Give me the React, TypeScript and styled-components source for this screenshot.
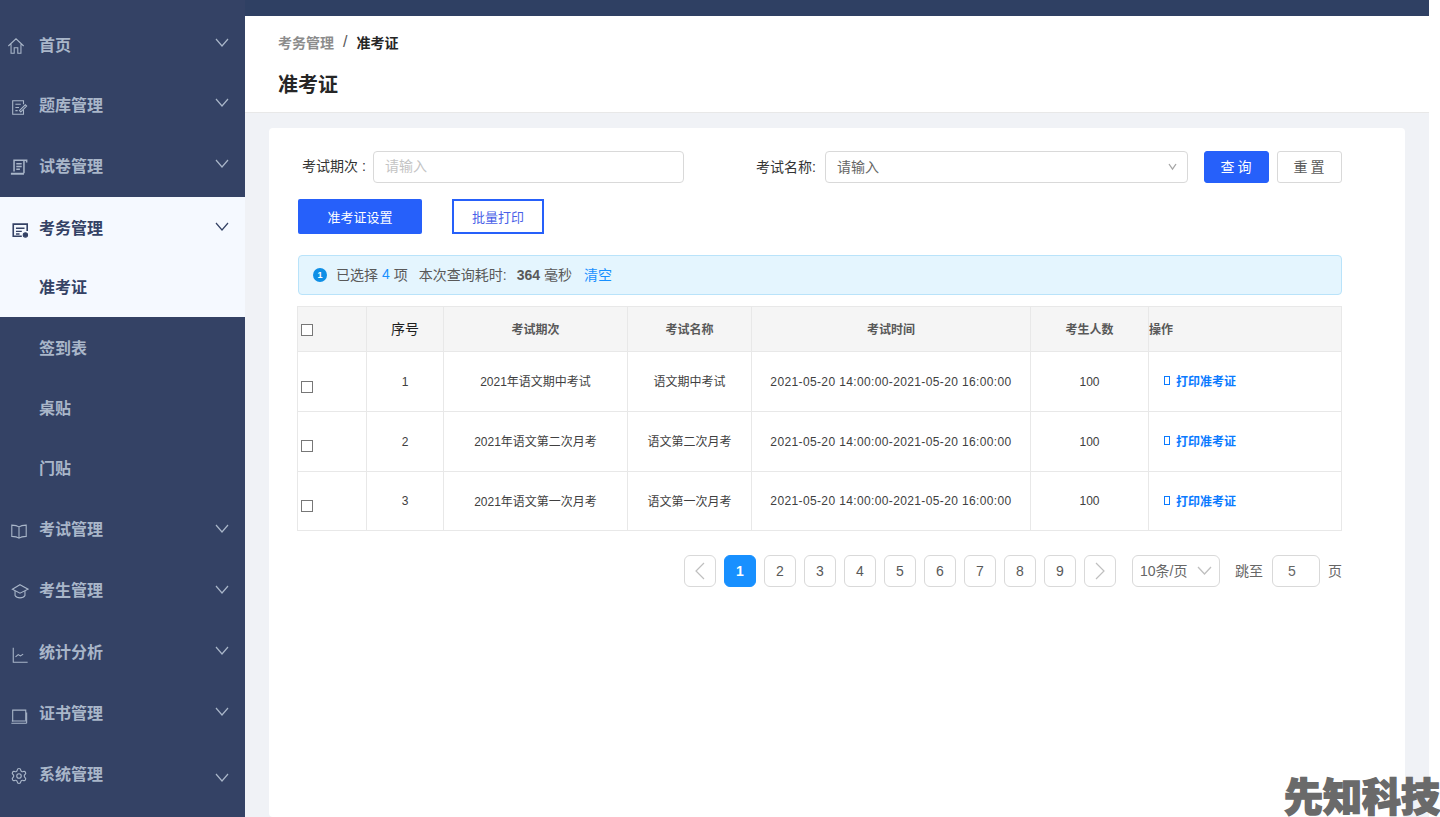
import React, { FC, ReactNode } from 'react';
import styled, { createGlobalStyle } from 'styled-components';

const GlobalStyle = createGlobalStyle`
	html, body {
		margin: 0;
		height: 100%;
		background: #fff;
		overflow: hidden;
	}
	body {
		font-family: 'Liberation Sans', 'Noto Sans CJK SC', sans-serif;
		color: #333;
	}
	* {
		box-sizing: border-box;
	}
`;

const icons: Record<string, ReactNode> = {
	home: (
		<path d="M1.5 10 L10 2 L18.5 10 M4.5 8 V18 H8 V12 H12 V18 H15.5 V8" />
	),
	edit: (
		<>
			<path d="M15 7 V3 H3 V18 H15 V13" />
			<path d="M6 7 H12 M6 10.5 H10 M6 14 H8.5" />
			<path d="M10.5 14 L17 7.5 L18.5 9 L12 15.5 Z" />
		</>
	),
	paper: (
		<>
			<path d="M4.5 15 V2.5 H18.5 V5 M15.5 2.5 V17" strokeWidth="1.7" />
			<path d="M7 6.5 H13 M7 9.5 H13 M7 12.5 H11" strokeWidth="1.7" />
			<path d="M1 17.5 H15.5" strokeWidth="2.2" />
		</>
	),
	exam: (
		<>
			<path d="M18 11 V3.5 H2.5 V17 H12" strokeWidth="1.8" />
			<path d="M5.5 8 H15 M5.5 11.5 H12 M5.5 14.5 H9.5" strokeWidth="1.6" />
			<circle cx="16" cy="15.5" r="2.4" fill="currentColor" />
		</>
	),
	book: (
		<path d="M10 5.5 C7.5 3.5 5 3.5 2 3.5 V16 C5 16 7.5 16 10 18 C12.5 16 15 16 18 16 V3.5 C15 3.5 12.5 3.5 10 5.5 Z M10 5.5 V18" />
	),
	cap: (
		<>
			<path d="M10 3 L19 8 L10 12.5 L1.5 8 Z" />
			<path d="M4.5 10 V15 C6.5 18.5 13.5 18.5 15.5 15 V10" />
		</>
	),
	chart: (
		<>
			<path d="M2.5 2 V18 H18.5" />
			<path d="M5 12 L8 9.5 L10.5 11 L13.5 9" />
		</>
	),
	laptop: (
		<>
			<path d="M3 16 V3.5 H17.5 V16" />
			<path d="M1.5 18 H18.5 M2 15.5 H17 M18.5 6 V18" />
		</>
	),
	gear: (
		<g transform="scale(.833)">
			<path
				strokeWidth="1.5"
				d="M9.671 4.136a2.34 2.34 0 0 1 4.659 0 2.34 2.34 0 0 0 3.319 1.915 2.34 2.34 0 0 1 2.33 4.033 2.34 2.34 0 0 0 0 3.831 2.34 2.34 0 0 1-2.33 4.033 2.34 2.34 0 0 0-3.319 1.915 2.34 2.34 0 0 1-4.659 0 2.34 2.34 0 0 0-3.32-1.915 2.34 2.34 0 0 1-2.33-4.033 2.34 2.34 0 0 0 0-3.831A2.34 2.34 0 0 1 6.35 6.051a2.34 2.34 0 0 0 3.319-1.915"
			/>
			<circle cx="12" cy="12" r="3" strokeWidth="1.5" />
		</g>
	),
};

const Page = styled.div`
	display: flex;
	height: 817px;
	width: 1440px;
	overflow: hidden;
	position: relative;
`;

const Sidebar = styled.nav`
	width: 245px;
	flex: none;
	background: #344265;
	padding-top: 14px;
`;

const ActiveGroup = styled.div`
	background: #f5f9ff;
`;

const MenuRow = styled.div<{ $height: number; $active?: boolean; $lift?: number }>`
	display: flex;
	align-items: center;
	height: ${(p) => p.$height}px;
	padding-left: 39px;
	padding-bottom: ${(p) => p.$lift ?? 2}px;
	position: relative;
	font-size: 16px;
	font-weight: 700;
	color: ${(p) => (p.$active ? '#344265' : '#a9b6c9')};
`;

const MenuIcon = styled.svg<{ $left: number; $shift: number }>`
	position: absolute;
	left: ${(p) => p.$left}px;
	top: calc(50% - 9px + ${(p) => p.$shift}px);
	width: 18px;
	height: 18px;
	fill: none;
	stroke: currentColor;
	stroke-width: 1.2;
`;

const Chevron = styled.svg<{ $shift: number }>`
	position: absolute;
	left: 215px;
	top: calc(50% - 5px + ${(p) => p.$shift}px);
	width: 14px;
	height: 9px;
	fill: none;
	stroke: currentColor;
	stroke-width: 1.2;
`;

const Main = styled.main`
	flex: none;
	width: 1184px;
	display: flex;
	flex-direction: column;
	background: #f0f2f6;
`;

const TopBar = styled.div`
	height: 16px;
	background: #2f4063;
`;

const Header = styled.header`
	height: 97px;
	background: #fff;
	border-bottom: 1px solid #e8e8e8;
	padding: 18px 0 0 33px;
`;

const Breadcrumb = styled.div`
	display: flex;
	gap: 9px;
	height: 16px;
	align-items: center;
	font-size: 14px;
	color: #8c8c8c;
	font-weight: 700;

	span:last-child {
		color: #262626;
	}
`;

const BreadcrumbSep = styled.span`
	font-size: 16px;
	font-weight: 400;
	color: #595959;
`;

const Title = styled.h1`
	margin: 21px 0 0;
	font-size: 20px;
	line-height: 28px;
	font-weight: 700;
	color: #262626;
`;

const Card = styled.section`
	flex: 1;
	margin: 15px 24px 0;
	background: #fff;
	border-radius: 4px;
	padding: 23px 63px 0 29px;
`;

const FilterRow = styled.div`
	display: flex;
	align-items: center;
	height: 32px;
	padding-left: 4px;
`;

const FieldLabel = styled.label<{ $width: number; $lift: number }>`
	width: ${(p) => p.$width}px;
	flex: none;
	font-size: 14px;
	color: #333;
	white-space: nowrap;
	padding-bottom: ${(p) => p.$lift}px;
`;

const TextBox = styled.div<{ $width: number; $muted?: boolean }>`
	width: ${(p) => p.$width}px;
	height: 32px;
	margin-left: 6px;
	border: 1px solid #d9d9d9;
	border-radius: 4px;
	padding: 0 7px ${(p) => (p.$muted ? 4 : 2)}px 11px;
	display: flex;
	align-items: center;
	justify-content: space-between;
	font-size: 14px;
	color: ${(p) => (p.$muted ? '#c4c4c4' : '#666')};
	flex: none;
`;

const FilterButton = styled.button<{ $primary?: boolean }>`
	width: 65px;
	height: 32px;
	margin-left: 8px;
	border-radius: 3px;
	border: 1px solid ${(p) => (p.$primary ? '#2660fa' : '#d9d9d9')};
	background: ${(p) => (p.$primary ? '#2660fa' : '#fff')};
	color: ${(p) => (p.$primary ? '#fff' : '#595959')};
	font: inherit;
	font-size: 14px;
	letter-spacing: 3px;
	padding: 0 0 2px 2px;
	flex: none;
`;

const ActionRow = styled.div`
	display: flex;
	gap: 30px;
	margin-top: 16px;
`;

const SolidButton = styled.button`
	width: 124px;
	height: 35px;
	border: 0;
	border-radius: 2px;
	background: #2660fa;
	color: #fff;
	font: inherit;
	font-size: 13px;
	padding: 0;
`;

const OutlineButton = styled.button`
	width: 92px;
	height: 35px;
	border: 2px solid #2660fa;
	background: #fff;
	color: #4a5fe8;
	font: inherit;
	font-size: 13px;
	padding: 0;
`;

const Alert = styled.div`
	margin-top: 21px;
	height: 40px;
	background: #e4f5fe;
	border: 1px solid #b9e3fa;
	border-radius: 4px;
	display: flex;
	align-items: center;
	padding: 0 0 2px 14px;
	font-size: 14px;
	color: #595959;
	white-space: pre;
`;

const AlertDot = styled.span`
	width: 14px;
	height: 14px;
	border-radius: 50%;
	background: #0e8fe6;
	color: #fff;
	font-size: 9px;
	font-weight: 700;
	display: flex;
	align-items: center;
	justify-content: center;
	margin: 2px 9px 0 0;
`;

const Blue = styled.span<{ $gap?: number }>`
	color: #1890ff;
	margin-left: ${(p) => p.$gap ?? 0}px;
`;

const Gap = styled.span<{ $gap: number }>`
	margin-left: ${(p) => p.$gap}px;
`;

const Table = styled.table`
	margin: 11px 0 0 -1px;
	width: 1044px;
	table-layout: fixed;
	border-collapse: collapse;
	font-size: 12px;
	color: #404040;

	th, td {
		border: 1px solid #e8e8e8;
		text-align: center;
	}

	th {
		height: 45px;
		padding: 0 0 2px;
		background: #f5f5f5;
		font-weight: 700;
		color: #595959;
	}

	th:first-child {
		padding: 2px 0 0;
	}

	td {
		height: 60px;
		padding: 0 0 2px;
	}

	tr:last-child td {
		height: 59px;
	}

	input {
		appearance: none;
		margin: 0 0 0 3px;
		width: 12px;
		height: 12px;
		display: block;
		border: 1px solid #777;
		background: #fff;
	}
`;

const NumberCell = styled.td`
	&& {
		padding: 0;
	}
`;

const CheckCell = styled.td`
	&& {
		padding: 0;
	}
`;

const CheckBox = styled.div<{ $down: number }>`
	padding-top: ${(p) => p.$down}px;
`;

const OperateHead = styled.th`
	&& {
		text-align: left;
	}
`;

const DateText = styled.span`
	letter-spacing: 0.37px;
`;

const SerialHead = styled.th`
	&& {
		color: #1f1f1f;
		font-size: 14px;
		font-weight: 400;
	}
`;

const OperateLink = styled.a`
	display: flex;
	align-items: center;
	padding-left: 15px;
	color: #0a7aff;
	font-weight: 700;
`;

const Tofu = styled.span`
	width: 6px;
	height: 9px;
	border: 1px solid #0a7aff;
	margin-right: 6px;
`;

const Pagination = styled.div`
	display: flex;
	justify-content: flex-end;
	align-items: center;
	margin-top: 24px;
	width: 1044px;
	font-size: 14px;
	color: #666;
`;

const PageList = styled.div`
	display: flex;
	gap: 8px;
`;

const PageButton = styled.div<{ $active?: boolean }>`
	width: 32px;
	height: 32px;
	border-radius: 6px;
	border: 1px solid ${(p) => (p.$active ? '#1890ff' : '#d9d9d9')};
	background: ${(p) => (p.$active ? '#1890ff' : '#fff')};
	color: ${(p) => (p.$active ? '#fff' : '#595959')};
	font-weight: ${(p) => (p.$active ? 700 : 400)};
	display: flex;
	align-items: center;
	justify-content: center;
`;

const PageArrow = styled.svg`
	width: 10px;
	height: 18px;
	fill: none;
	stroke: #bfbfbf;
	stroke-width: 1.2;
`;

const SizeSelect = styled.div`
	width: 88px;
	height: 32px;
	margin-left: 16px;
	border: 1px solid #d9d9d9;
	border-radius: 6px;
	padding: 0 7px 2px;
	display: flex;
	align-items: center;
	justify-content: space-between;
	white-space: nowrap;
`;

const JumpLabel = styled.span`
	margin-left: 15px;
	white-space: nowrap;
	padding-bottom: 3px;
`;

const JumpInput = styled.div`
	width: 48px;
	height: 32px;
	margin: 0 8px 0 9px;
	border: 1px solid #d9d9d9;
	border-radius: 6px;
	padding-left: 15px;
	display: flex;
	align-items: center;
`;

const PageUnit = styled.span`
	padding-bottom: 3px;
`;

const SelectChevron = styled.svg<{ $color: string }>`
	flex: none;
	width: 15px;
	height: 9px;
	fill: none;
	stroke: ${(p) => p.$color};
	stroke-width: 1.3;
`;

const Watermark = styled.div`
	position: absolute;
	right: 0;
	bottom: -1px;
	font-size: 39px;
	line-height: 40px;
	font-weight: 900;
	color: #6a6a6a;
	-webkit-text-stroke: 1.4px #6a6a6a;
`;

const menuTop = [
	{ label: '首页', icon: 'home', height: 61, shift: -2, left: 7, iconShift: 1.5, lift: 2 },
	{ label: '题库管理', icon: 'edit', height: 61, shift: -3, left: 10, iconShift: 1, lift: 4 },
	{ label: '试卷管理', icon: 'paper', height: 61, shift: -3, left: 10, iconShift: 0.5, lift: 4 },
];

const menuSub = [
	{ label: '签到表', height: 61 },
	{ label: '桌贴', height: 60 },
	{ label: '门贴', height: 60 },
];

const menuBottom = [
	{ label: '考试管理', icon: 'book', height: 61, shift: 0, left: 10, iconShift: 2.5, lift: 2 },
	{ label: '考生管理', icon: 'cap', height: 61, shift: 0, left: 11, iconShift: 1, lift: 2 },
	{ label: '统计分析', icon: 'chart', height: 62, shift: 0, left: 11, iconShift: 3.5, lift: 0 },
	{ label: '证书管理', icon: 'laptop', height: 61, shift: -1, left: 10, iconShift: 3, lift: 2 },
	{ label: '系统管理', icon: 'gear', height: 61, shift: 4, left: 10, iconShift: 2, lift: 2 },
];

const rows = [
	{ id: 1, period: '2021年语文期中考试', name: '语文期中考试', check: 11 },
	{ id: 2, period: '2021年语文第二次月考', name: '语文第二次月考', check: 8 },
	{ id: 3, period: '2021年语文第一次月考', name: '语文第一次月考', check: 10 },
];

const MenuItem: FC<{
	label: string;
	icon: string;
	height: number;
	shift: number;
	left: number;
	iconShift: number;
	lift?: number;
	active?: boolean;
}> = ({ label, icon, height, shift, left, iconShift, lift, active }) => (
	<MenuRow $height={height} $active={active} $lift={lift}>
		<MenuIcon $left={left} $shift={iconShift} viewBox="0 0 20 20">
			{icons[icon]}
		</MenuIcon>
		{label}
		<Chevron $shift={shift} viewBox="0 0 14 9">
			<path d="M1 1 L7 8 L13 1" />
		</Chevron>
	</MenuRow>
);

const App: FC = () => (
	<Page>
		<GlobalStyle />
		<Sidebar>
			{menuTop.map((m) => (
				<MenuItem key={m.label} {...m} />
			))}
			<ActiveGroup>
				<MenuItem label="考务管理" icon="exam" height={60} shift={0} left={11} iconShift={3} lift={0} active />
				<MenuRow $height={60} $active>
					准考证
				</MenuRow>
			</ActiveGroup>
			{menuSub.map((m) => (
				<MenuRow key={m.label} $height={m.height}>
					{m.label}
				</MenuRow>
			))}
			{menuBottom.map((m) => (
				<MenuItem key={m.label} {...m} />
			))}
		</Sidebar>
		<Main>
			<TopBar />
			<Header>
				<Breadcrumb>
					<span>考务管理</span>
					<BreadcrumbSep>/</BreadcrumbSep>
					<span>准考证</span>
				</Breadcrumb>
				<Title>准考证</Title>
			</Header>
			<Card>
				<FilterRow>
					<FieldLabel $width={65} $lift={4}>
						考试期次 :
					</FieldLabel>
					<TextBox $width={311} $muted>
						请输入
					</TextBox>
					<Gap $gap={72} />
					<FieldLabel $width={63} $lift={2}>
						考试名称:
					</FieldLabel>
					<TextBox $width={363}>
						请输入
						<SelectChevron $color="#a6a6a6" viewBox="0 0 15 9">
							<path d="M4 2 L7.5 7 L11 2" />
						</SelectChevron>
					</TextBox>
					<Gap $gap={8} />
					<FilterButton $primary>查询</FilterButton>
					<FilterButton>重置</FilterButton>
				</FilterRow>
				<ActionRow>
					<SolidButton>准考证设置</SolidButton>
					<OutlineButton>批量打印</OutlineButton>
				</ActionRow>
				<Alert>
					<AlertDot>1</AlertDot>
					已选择<Blue $gap={4}>4</Blue>
					<Gap $gap={4}>项</Gap>
					<Gap $gap={11}>本次查询耗时:</Gap>
					<Gap $gap={10}>
						<b>364</b> 毫秒
					</Gap>
					<Blue $gap={12}>清空</Blue>
				</Alert>
				<Table>
					<colgroup>
						<col width={69} />
						<col width={77} />
						<col width={184} />
						<col width={124} />
						<col width={279} />
						<col width={118} />
						<col width={193} />
					</colgroup>
					<thead>
						<tr>
							<th>
								<input type="checkbox" />
							</th>
							<SerialHead>序号</SerialHead>
							<th>考试期次</th>
							<th>考试名称</th>
							<th>考试时间</th>
							<th>考生人数</th>
							<OperateHead>操作</OperateHead>
						</tr>
					</thead>
					<tbody>
						{rows.map((r) => (
							<tr key={r.id}>
								<CheckCell>
									<CheckBox $down={r.check}>
										<input type="checkbox" />
									</CheckBox>
								</CheckCell>
								<NumberCell>{r.id}</NumberCell>
								<td>{r.period}</td>
								<td>{r.name}</td>
								<NumberCell>
									<DateText>2021-05-20 14:00:00-2021-05-20 16:00:00</DateText>
								</NumberCell>
								<NumberCell>100</NumberCell>
								<td>
									<OperateLink>
										<Tofu />
										打印准考证
									</OperateLink>
								</td>
							</tr>
						))}
					</tbody>
				</Table>
				<Pagination>
					<PageList>
						<PageButton>
							<PageArrow viewBox="0 0 10 18">
								<path d="M9 1 L1 9 L9 17" />
							</PageArrow>
						</PageButton>
						{[1, 2, 3, 4, 5, 6, 7, 8, 9].map((n) => (
							<PageButton key={n} $active={n === 1}>
								{n}
							</PageButton>
						))}
						<PageButton>
							<PageArrow viewBox="0 0 10 18">
								<path d="M1 1 L9 9 L1 17" />
							</PageArrow>
						</PageButton>
					</PageList>
					<SizeSelect>
						10条/页
						<SelectChevron $color="#bfbfbf" viewBox="0 0 15 9">
							<path d="M1 1 L7.5 8 L14 1" />
						</SelectChevron>
					</SizeSelect>
					<JumpLabel>跳至</JumpLabel>
					<JumpInput>5</JumpInput>
					<PageUnit>页</PageUnit>
				</Pagination>
			</Card>
		</Main>
		<Watermark>先知科技</Watermark>
	</Page>
);

export default App;
